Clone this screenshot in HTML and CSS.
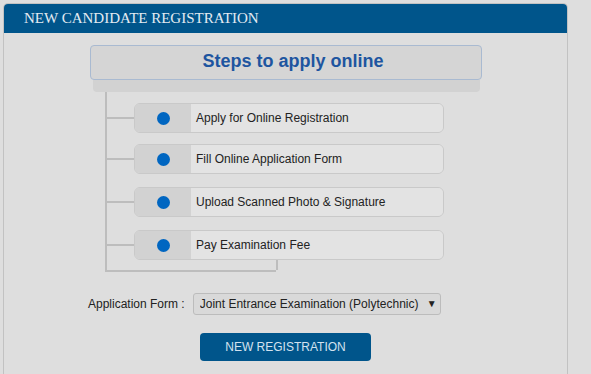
FILE: index.html
```html
<!DOCTYPE html>
<html lang="en">
<head>
  <meta charset="UTF-8">
  <title>New Candidate Registration</title>
  <link rel="stylesheet" href="styles.css">
</head>
<body>

  <div class="panel">
    <div class="panel-head">NEW CANDIDATE REGISTRATION</div>

    <div class="steps">
      <div class="steps-title">Steps to apply online</div>
      <div class="steps-base"></div>

      <div class="steps-tree">
        <div class="step">
          <div class="step-icon"><span class="dot"></span></div>
          <div class="step-text">Apply for Online Registration</div>
        </div>
        <div class="step">
          <div class="step-icon"><span class="dot"></span></div>
          <div class="step-text">Fill Online Application Form</div>
        </div>
        <div class="step">
          <div class="step-icon"><span class="dot"></span></div>
          <div class="step-text">Upload Scanned Photo &amp; Signature</div>
        </div>
        <div class="step">
          <div class="step-icon"><span class="dot"></span></div>
          <div class="step-text">Pay Examination Fee</div>
        </div>
      </div>
    </div>

    <div class="form-row">
      <label for="appForm">Application Form :</label>
      <div class="select-wrap">
        <select id="appForm">
          <option>Joint Entrance Examination (Polytechnic)</option>
        </select>
      </div>
    </div>

    <button class="reg-btn">NEW REGISTRATION</button>
  </div>

</body>
</html>
```

FILE: styles.css
```css
body {
  font-family: "Liberation Sans", Arial, sans-serif;
  background-color: #dedede;
  margin: 0;
  padding: 3px 0 0 3px;
}
.panel {
  width: 563px;
  height: 380px;
  border: 1px solid #c2c2c2;
  border-bottom: none;
  border-radius: 5px 5px 0 0;
  background-color: #dedede;
}
.panel-head {
  height: 29px;
  line-height: 29px;
  padding-left: 20px;
  background-color: #00558b;
  border-radius: 4px 4px 0 0;
  color: #e3ebf2;
  font-family: "Liberation Serif", "Times New Roman", serif;
  font-size: 15px;
}
.steps {
  width: 392px;
  margin: 12px 0 0 86px;
}
.steps-title {
  height: 30px;
  line-height: 30px;
  padding: 0 0 3px 14px;
  border: 1px solid #a9bad1;
  border-radius: 4px;
  background-color: #d5d5d5;
  color: #1e55a0;
  font-size: 18px;
  font-weight: bold;
  text-align: center;
}
.steps-base {
  height: 12px;
  margin: 0 2px 0 3px;
  background-color: #d2d2d2;
  border-radius: 0 0 4px 4px;
}
.steps-tree {
  position: relative;
  width: 169px;
  margin-left: 15px;
  padding: 11px 0 10px;
  border-left: 2px solid #bdbdbd;
  border-bottom: 2px solid #bdbdbd;
}
/* small tick at the end of the bottom line */
.steps-tree::after {
  content: "";
  position: absolute;
  right: -2px;
  bottom: 0;
  width: 2px;
  height: 10px;
  background-color: #bdbdbd;
}
.step {
  position: relative;
  display: flex;
  width: 310px;
  height: 30px;
  box-sizing: border-box;
  margin: 0 0 13px 27px;
  border: 1px solid #c9c9c9;
  border-radius: 6px;
}
.step:first-child {
  margin-bottom: 11px;
}
.step:last-child {
  margin-bottom: 0;
}
.step::before {
  content: "";
  position: absolute;
  left: -29px;
  top: 13px;
  width: 28px;
  height: 2px;
  background-color: #bdbdbd;
}
.step-icon {
  width: 56px;
  display: flex;
  align-items: center;
  justify-content: center;
  background-color: #d2d2d2;
  border-radius: 5px 0 0 5px;
}
.dot {
  width: 13px;
  height: 13px;
  border-radius: 50%;
  background-color: #0066c1;
}
.step-text {
  flex: 1;
  padding-left: 5px;
  line-height: 28px;
  font-size: 12px;
  color: #222;
  background-color: #e3e3e3;
  border-radius: 0 5px 5px 0;
}
.form-row {
  display: flex;
  align-items: center;
  margin: 21px 0 0 84px;
}
.form-row label {
  font-size: 12px;
  color: #222;
  margin-right: 8px;
}
.select-wrap {
  position: relative;
}
.select-wrap::after {
  content: "\25BC";
  position: absolute;
  right: 4px;
  top: 5px;
  font-size: 10px;
  color: #222;
  pointer-events: none;
}
.select-wrap select {
  appearance: none;
  -webkit-appearance: none;
  width: 248px;
  height: 22px;
  padding: 0 0 0 6px;
  border: 1px solid #bcbcbc;
  border-radius: 3px;
  background-color: #d9d9d9;
  font-family: "Liberation Sans", Arial, sans-serif;
  font-size: 12px;
  color: #222;
}
.reg-btn {
  display: block;
  width: 171px;
  height: 28px;
  margin: 18px 0 0 196px;
  border: none;
  border-radius: 4px;
  background-color: #00558b;
  color: #d3e2ef;
  font-family: "Liberation Sans", Arial, sans-serif;
  font-size: 12px;
}
```
